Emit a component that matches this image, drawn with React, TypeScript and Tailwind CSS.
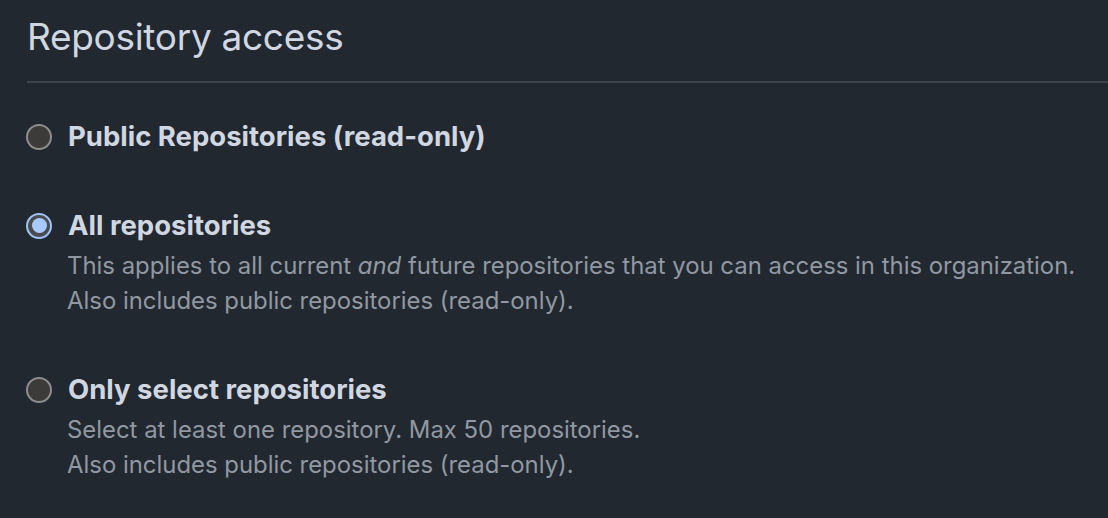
import React from "react";

interface Option {
  label: string;
  checked?: boolean;
  lines?: React.ReactNode[];
}

const options: Option[] = [
  { label: "Public Repositories (read-only)" },
  {
    label: "All repositories",
    checked: true,
    lines: [
      <>
        This applies to all current <em>and</em> future repositories that you can access in this organization.
      </>,
      "Also includes public repositories (read-only).",
    ],
  },
  {
    label: "Only select repositories",
    lines: ["Select at least one repository. Max 50 repositories.", "Also includes public repositories (read-only)."],
  },
];

function Radio({ checked }: { checked?: boolean }) {
  if (checked) {
    return (
      <span className="flex h-[26px] w-[26px] shrink-0 items-center justify-center rounded-full border-2 border-[#9cc3fa] bg-[#4b4b4d]">
        <span className="h-[15px] w-[15px] rounded-full bg-[#a8cbff]" />
      </span>
    );
  }
  return <span className="h-[26px] w-[26px] shrink-0 rounded-full border-2 border-[#8d8d8d] bg-[#3c3b3a]" />;
}

export default function App() {
  return (
    <div
      className="h-[518px] w-[1108px] overflow-hidden bg-[#212830] pl-[27px]"
      style={{ fontFamily: "Inter, 'Noto Sans', sans-serif" }}
    >
      <h2 className="pt-[14px] pb-[21px] text-[37px] leading-[46px] font-normal text-[#d1d7e0] tracking-[-0.3px]">
        Repository access
      </h2>
      <div className="h-[2px] bg-[#3d444d]" />
      <ul className="flex flex-col gap-[54px] pt-[36px]">
        {options.map((o) => (
          <li key={o.label} className="flex flex-col">
            <label className="-ml-[1px] flex items-center gap-[16px]">
              <Radio checked={o.checked} />
              <span className="text-[27.5px] leading-[35px] font-bold text-[#d1d7e0]">{o.label}</span>
            </label>
            {o.lines && (
              <div className="pl-[40px] pt-[5px] text-[23.9px] leading-[35px] text-[#9198a1]">
                {o.lines.map((l, i) => (
                  <p key={i}>{l}</p>
                ))}
              </div>
            )}
          </li>
        ))}
      </ul>
    </div>
  );
}
